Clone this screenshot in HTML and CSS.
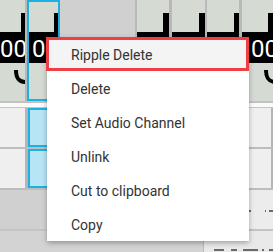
FILE: index.html
```html
<!DOCTYPE html>
<html>
<head>
<meta charset="utf-8">
<link rel="stylesheet" href="styles.css">
</head>
<body>
<div class="timeline">
  <div class="video-track">
    <div class="clip w25">
      <svg class="frame" width="25" height="101" viewBox="0 0 25 101">
        <rect width="25" height="101" fill="#d5dad3"/>
        <rect x="21" y="13" width="4" height="20" fill="#000"/>
        <rect x="0" y="32" width="25" height="31" fill="#000"/>
        <text x="0" y="57" class="digits">00</text>
        <path d="M16 70 C16 79 19 82 26 82" fill="none" stroke="#000" stroke-width="4"/>
      </svg>
    </div>
    <div class="clip sel w33">
      <svg class="frame" width="29" height="97" viewBox="0 0 29 97">
        <rect width="29" height="97" fill="#d5dad3"/>
        <rect x="25" y="11" width="4" height="20" fill="#000"/>
        <rect x="0" y="30" width="29" height="31" fill="#000"/>
        <text x="3" y="55" class="digits">0</text>
      </svg>
    </div>
    <div class="gap-area"></div>
    <div class="clip w33 sep">
      <svg class="frame" width="32" height="101" viewBox="0 0 32 101">
        <rect width="32" height="101" fill="#d5dad3"/>
        <rect x="26" y="13" width="6" height="20" fill="#000"/>
        <rect x="0" y="32" width="32" height="31" fill="#000"/>
      </svg>
    </div>
    <div class="clip w33 sep">
      <svg class="frame" width="33" height="101" viewBox="0 0 33 101">
        <rect width="33" height="101" fill="#d5dad3"/>
        <rect x="27" y="13" width="6" height="20" fill="#000"/>
        <rect x="0" y="32" width="33" height="31" fill="#000"/>
      </svg>
    </div>
    <div class="clip w32 sep">
      <svg class="frame" width="32" height="101" viewBox="0 0 32 101">
        <rect width="32" height="101" fill="#d5dad3"/>
        <rect x="27" y="13" width="5" height="20" fill="#000"/>
        <rect x="0" y="32" width="32" height="31" fill="#000"/>
      </svg>
    </div>
    <div class="clip w32 sep3">
      <svg class="frame" width="32" height="101" viewBox="0 0 32 101">
        <rect width="32" height="101" fill="#d5dad3"/>
        <rect x="26" y="13" width="6" height="20" fill="#000"/>
        <rect x="0" y="32" width="32" height="31" fill="#000"/>
        <text x="9" y="57" class="digits">00</text>
        <path d="M24 70 C24 79 27 82 34 82" fill="none" stroke="#000" stroke-width="4"/>
      </svg>
    </div>
  </div>
  <div class="track-gap"></div>
  <div class="audio-lane">
    <div class="acell w25"></div>
    <div class="acell asel"></div>
    <div class="aspace"></div>
    <div class="acell right"></div>
  </div>
  <div class="audio-lane">
    <div class="acell w25"></div>
    <div class="acell asel"></div>
    <div class="aspace"></div>
    <div class="acell right"></div>
  </div>
  <div class="empty-row">
    <div class="empty-left"></div>
    <div class="empty-right"><div class="dash-line d1"></div></div>
  </div>
  <div class="bottom-row">
    <div class="bottom-left"></div>
    <div class="bottom-right"><div class="dash-line d2"></div></div>
  </div>
</div>

<ul class="menu">
  <li class="item active">Ripple Delete</li>
  <li class="item">Delete</li>
  <li class="item">Set Audio Channel</li>
  <li class="item">Unlink</li>
  <li class="item">Cut to clipboard</li>
  <li class="item">Copy</li>
</ul>
</body>
</html>
```
FILE: styles.css
```css
html, body {
  margin: 0;
  padding: 0;
}
body {
  width: 273px;
  height: 252px;
  overflow: hidden;
  background: #d2d2d2;
  font-family: Roboto, "Liberation Sans", sans-serif;
  position: relative;
}
.timeline {
  display: flex;
  flex-direction: column;
  width: 273px;
}
.video-track {
  display: flex;
  height: 101px;
  background: #b9b9b9;
  border-bottom: 2px solid #c2c2c2;
}
.clip {
  height: 101px;
  overflow: hidden;
  flex: none;
}
.frame { display: block; }
.digits {
  font-family: Roboto, "Liberation Sans", sans-serif;
  font-size: 24px;
  fill: #fff;
}
.w25 { width: 25px; }
.w33 { width: 33px; }
.w32 { width: 32px; }
.clip.sel {
  margin-left: 2px;
  width: 29px;
  height: 97px;
  border: 2px solid #1db1e2;
}
.gap-area {
  flex: none;
  width: 75px;
  background: #d0d0d0;
}
.sep { margin-left: 2px; }
.sep3 { margin-left: 3px; }
.track-gap {
  height: 4px;
  background: #fafafa;
  border-bottom: 1px solid #c6c6c6;
}
.audio-lane {
  display: flex;
  height: 39px;
  background: #b5b5b5;
  border-bottom: 2px solid #bdbdbd;
}
.acell {
  flex: none;
  background: #efefef;
}
.acell.w25 { width: 25px; }
.acell.asel {
  margin-left: 3px;
  width: 30px;
  background: #b7e5f5;
  border: 2px solid #1db1e2;
  height: 35px;
}
.aspace {
  flex: 1;
  background: #d0d0d0;
}
.acell.right {
  width: 28px;
  border-right: 2px solid #b5b5b5;
}
.empty-row {
  display: flex;
  height: 39px;
  border-bottom: 2px solid #c4c4c4;
}
.empty-left {
  width: 203px;
  background: #d0d0d0;
}
.empty-right {
  flex: 1;
  background: #ececec;
  padding-top: 20px;
}
.bottom-row {
  display: flex;
  height: 22px;
}
.bottom-left {
  width: 203px;
  background: #d3d3d3;
  border-right: 1px solid #bcbcbc;
}
.bottom-right {
  flex: 1;
  background: #e9e9e9;
  padding-top: 18px;
}
.dash-line {
  height: 2px;
}
.d1 {
  background: linear-gradient(90deg, #6a6a6a 0 2px, transparent 2px 16px, #6a6a6a 16px 17px, transparent 17px 20px, #6a6a6a 20px 24px);
  margin-left: 46px;
}
.d2 {
  background: linear-gradient(90deg, #6a6a6a 0 10px, transparent 10px 17px, #6a6a6a 17px 23px, transparent 23px 29px, #6a6a6a 29px 44px, transparent 44px 48px, #6a6a6a 48px 50px, transparent 50px 55px, #6a6a6a 55px 70px);
  margin-left: 10px;
}
.menu {
  position: absolute;
  left: 47px;
  top: 37px;
  width: 202px;
  margin: 0;
  padding: 0;
  list-style: none;
  background: #fff;
  box-shadow: 0 2px 5px rgba(0,0,0,0.3);
}
.item {
  height: 34px;
  line-height: 36px;
  padding-left: 24px;
  font-size: 14px;
  color: #333;
  box-sizing: border-box;
}
.item.active {
  background: #f4f4f4;
  border: 3px solid #ef3f45;
  margin-left: -1px;
  padding-left: 22px;
  line-height: 30px;
}
```
